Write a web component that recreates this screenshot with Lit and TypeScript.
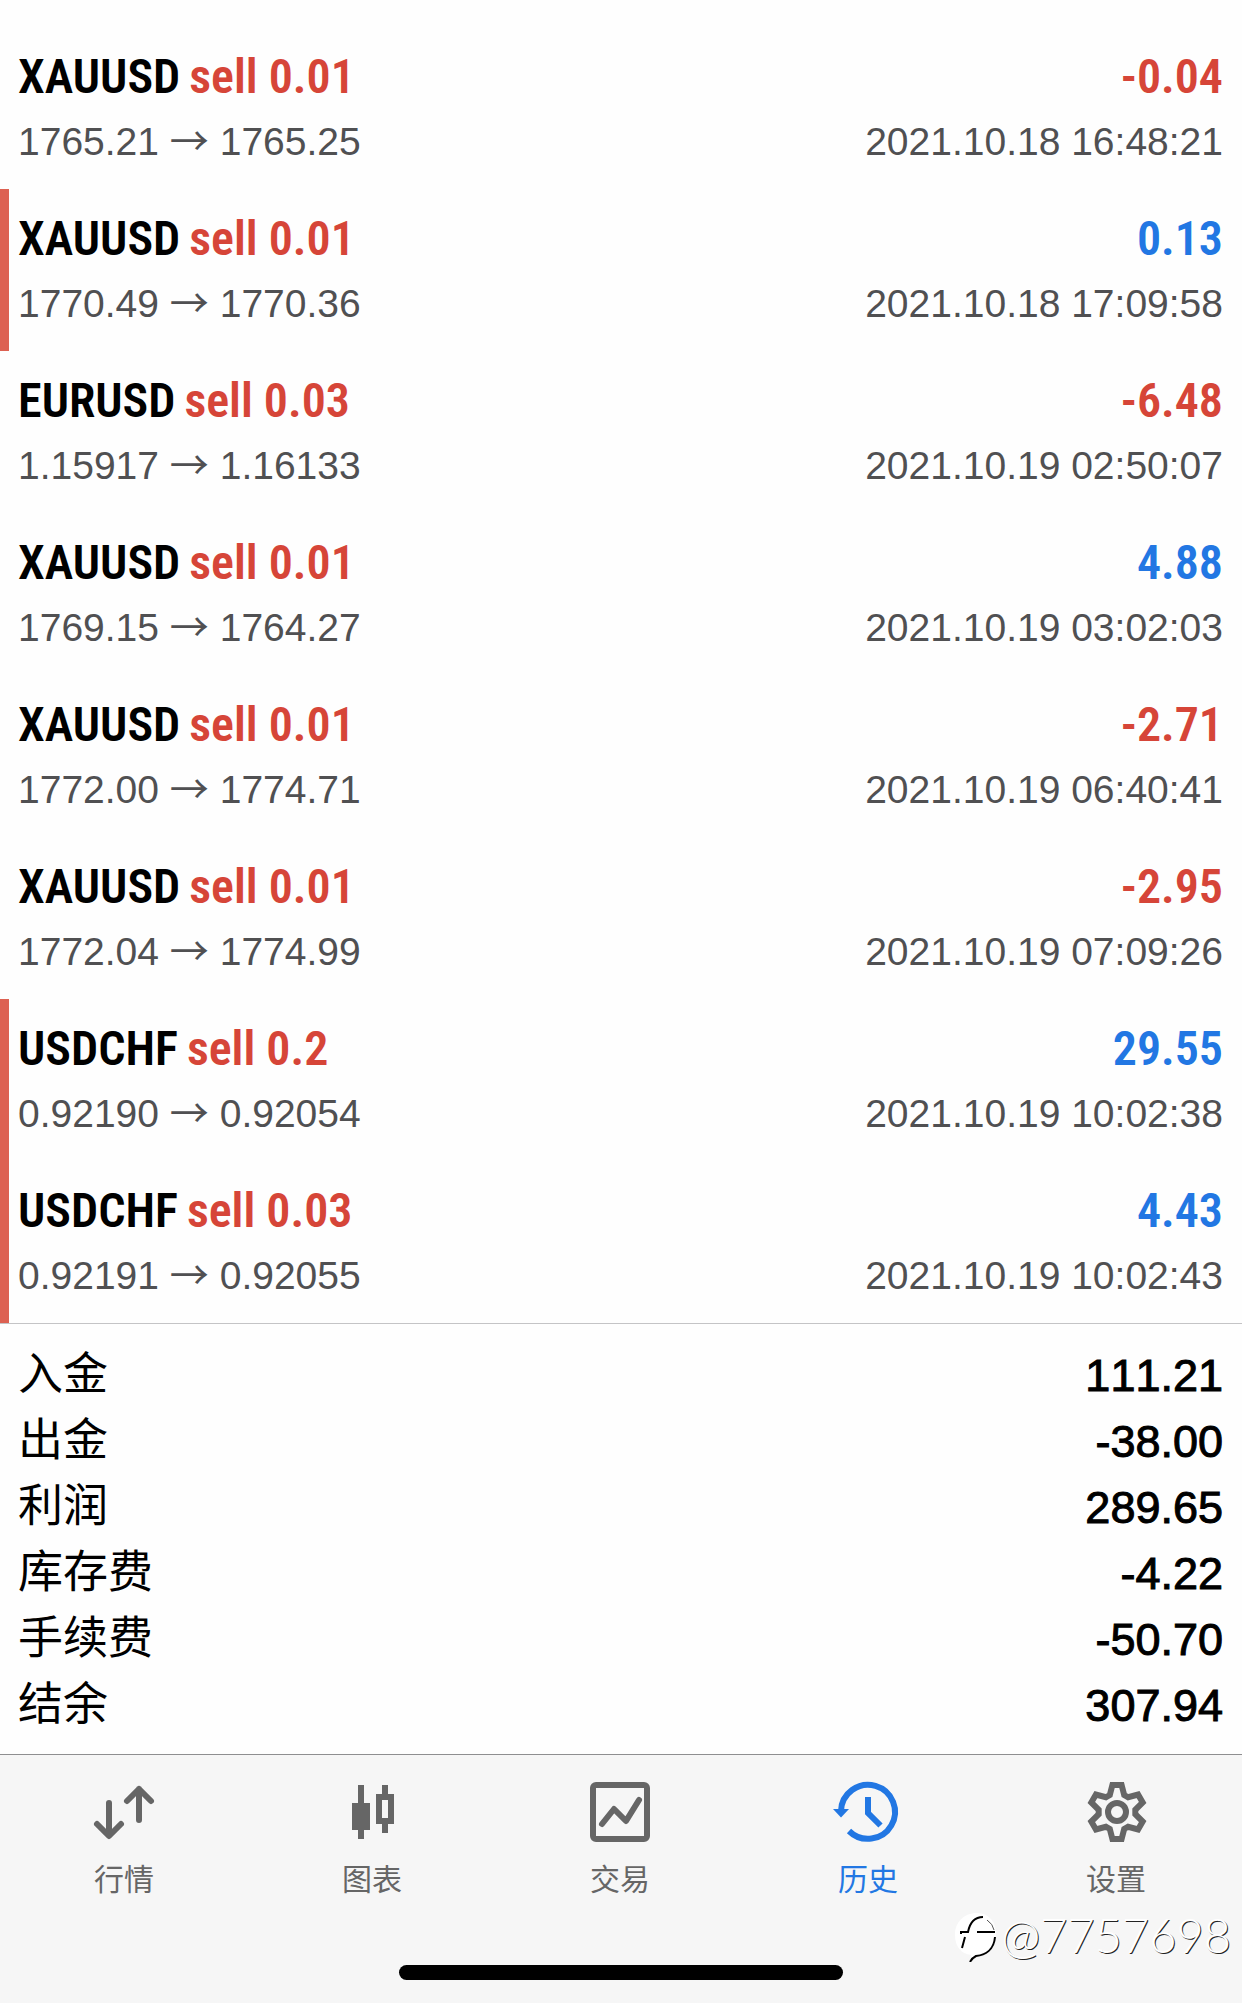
import { LitElement, html, css, svg, nothing } from "lit";
import { customElement, property, state } from "lit/decorators.js";

interface Deal {
  symbol: string;
  side: string;
  volume: string;
  open: string;
  close: string;
  time: string;
  profit: string;
  marked?: boolean;
}

const DEALS: Deal[] = [
  { symbol: "XAUUSD", side: "sell", volume: "0.01", open: "1765.21", close: "1765.25", time: "2021.10.18 16:48:21", profit: "-0.04" },
  { symbol: "XAUUSD", side: "sell", volume: "0.01", open: "1770.49", close: "1770.36", time: "2021.10.18 17:09:58", profit: "0.13", marked: true },
  { symbol: "EURUSD", side: "sell", volume: "0.03", open: "1.15917", close: "1.16133", time: "2021.10.19 02:50:07", profit: "-6.48" },
  { symbol: "XAUUSD", side: "sell", volume: "0.01", open: "1769.15", close: "1764.27", time: "2021.10.19 03:02:03", profit: "4.88" },
  { symbol: "XAUUSD", side: "sell", volume: "0.01", open: "1772.00", close: "1774.71", time: "2021.10.19 06:40:41", profit: "-2.71" },
  { symbol: "XAUUSD", side: "sell", volume: "0.01", open: "1772.04", close: "1774.99", time: "2021.10.19 07:09:26", profit: "-2.95" },
  { symbol: "USDCHF", side: "sell", volume: "0.2", open: "0.92190", close: "0.92054", time: "2021.10.19 10:02:38", profit: "29.55", marked: true },
  { symbol: "USDCHF", side: "sell", volume: "0.03", open: "0.92191", close: "0.92055", time: "2021.10.19 10:02:43", profit: "4.43", marked: true },
];

const TOTALS: [string, string][] = [
  ["入金", "111.21"],
  ["出金", "-38.00"],
  ["利润", "289.65"],
  ["库存费", "-4.22"],
  ["手续费", "-50.70"],
  ["结余", "307.94"],
];

/* One gear tooth, repeated at every 60 degrees around the centre. */
const TOOTH = [[-7.2, -17], [-4.6, -27], [4.6, -27], [7.2, -17]];
const GEAR = [0, 1, 2, 3, 4, 5]
  .flatMap((i) => {
    const c = Math.cos((i * Math.PI) / 3);
    const s = Math.sin((i * Math.PI) / 3);
    return TOOTH.map(([x, y]) => `${(31 + x * c - y * s).toFixed(2)},${(30 + x * s + y * c).toFixed(2)}`);
  })
  .join(" ");

const TABS = [
  {
    id: "quotes",
    label: "行情",
    icon: svg`<g fill="none" stroke="currentColor" stroke-width="6" stroke-linecap="round" stroke-linejoin="round">
      <path d="M15 21V53M3 42L15 54L27 42"/><path d="M45 38V7M33 19L45 7L57 19"/></g>`,
  },
  {
    id: "charts",
    label: "图表",
    icon: svg`<path fill="currentColor" d="M16 3h6v18h6v27h-6v9h-6v-9h-6V21h6z"/>
      <path fill="currentColor" fill-rule="evenodd" d="M40 3h6v9h6v30h-6v9h-6v-9h-6V12h6zM40 18v18h6V18z"/>`,
  },
  {
    id: "trade",
    label: "交易",
    icon: svg`<g fill="none" stroke="currentColor" stroke-width="6">
      <rect x="3" y="3" width="54" height="54" rx="3"/>
      <path stroke-linecap="round" stroke-linejoin="round" d="M12 42L24 27L36 39L49 18"/></g>`,
  },
  {
    id: "history",
    label: "历史",
    icon: svg`<g fill="none" stroke="currentColor" stroke-width="6">
      <path d="M3 29A27 27 0 1 1 11 49"/><path d="M30 15V31L42.500 43.500"/></g>
      <path fill="currentColor" d="M-5 27H11L3 35.500z"/>`,
  },
  {
    id: "settings",
    label: "设置",
    icon: svg`<g fill="none" stroke="currentColor" stroke-width="6">
      <polygon points=${GEAR}/><circle cx="31" cy="30" r="9"/></g>`,
  },
];

@customElement("deal-row")
class DealRow extends LitElement {
  @property({ attribute: false }) deal!: Deal;

  static styles = css`
    :host { display: block; }
    .row {
      display: grid;
      grid-template-columns: 1fr auto;
      grid-template-rows: 63px 67px;
      align-content: start;
      align-items: center;
      min-height: 162px;
      box-sizing: border-box;
      padding: 18px 19px 14px 9px;
      border-left: 9px solid transparent;
    }
    .marked { border-left-color: #dd6152; }
    .head, .profit {
      font: 600 48px/63px "Roboto Condensed", "Liberation Sans Narrow", "Liberation Sans", sans-serif;
      white-space: nowrap;
    }
    .head { display: flex; gap: 9px; }
    .symbol { color: #000; }
    .deal, .loss { color: #d64538; }
    .gain { color: #2277e3; }
    .profit { text-align: right; }
    .prices, .time {
      color: #505052;
      font: 400 39px/51px "Liberation Sans", "Noto Sans CJK SC", sans-serif;
      font-kerning: none;
      white-space: nowrap;
    }
    .arrow { font-family: "Noto Sans CJK SC", sans-serif; line-height: 1; }
  `;

  render() {
    const d = this.deal;
    return html`
      <div class="row ${d.marked ? "marked" : ""}">
        <div class="head"><span class="symbol">${d.symbol}</span> <span class="deal">${d.side} ${d.volume}</span></div>
        <div class="profit ${d.profit.startsWith("-") ? "loss" : "gain"}">${d.profit}</div>
        <div class="prices">${d.open} <span class="arrow">→</span> ${d.close}</div>
        <div class="time">${d.time}</div>
      </div>
    `;
  }
}

@customElement("tab-bar")
class TabBar extends LitElement {
  @state() private active = "history";

  static styles = css`
    :host { display: block; }
    .tabs { display: grid; grid-template-columns: repeat(5, 1fr); padding-right: 2px; }
    .tab {
      display: flex;
      flex-direction: column;
      align-items: center;
      gap: 13px;
      padding: 27px 0 0;
      border: 0;
      background: none;
      color: #666;
      font: 400 30px/44px "Noto Sans CJK SC", sans-serif;
      cursor: pointer;
    }
    .active { color: #2277e3; }
    .icon { display: block; width: 60px; height: 60px; overflow: visible; }
  `;

  render() {
    return html`
      <nav class="tabs">
        ${TABS.map(
          (t) => html`
            <button
              class="tab ${t.id === this.active ? "active" : ""}"
              aria-current=${t.id === this.active ? "page" : nothing}
              @click=${() => (this.active = t.id)}
            >
              <svg class="icon" viewBox="0 0 60 60" aria-hidden="true">${t.icon}</svg>
              <span>${t.label}</span>
            </button>
          `
        )}
      </nav>
    `;
  }
}

@customElement("app-root")
class AppRoot extends LitElement {
  static styles = css`
    :host {
      display: flex;
      flex-direction: column;
      min-height: 100vh;
      background: #fefefe;
      font-family: "Liberation Sans", "Noto Sans CJK SC", sans-serif;
    }
    .deals { padding-top: 27px; }
    .totals {
      margin: 0;
      padding: 17px 19px 17px 18px;
      border-top: 1px solid #c4c4c6;
    }
    .total {
      display: flex;
      justify-content: space-between;
      height: 66px;
      color: #000;
    }
    .name { font: 400 45px/60px "Noto Sans CJK SC", sans-serif; }
    .value {
      margin: 0;
      font: 400 45px/70px "Liberation Sans", sans-serif;
      font-kerning: none;
      -webkit-text-stroke: 1px #000;
    }
    .footer {
      position: relative;
      flex: 1;
      display: flex;
      flex-direction: column;
      justify-content: space-between;
      border-top: 1px solid #8e8e90;
      background: #f6f6f6;
    }
    .home {
      align-self: center;
      width: 444px;
      max-width: 80%;
      height: 15px;
      margin: 0 0 23px;
      border-radius: 8px;
      background: #000;
    }
    .mark {
      position: absolute;
      right: 11px;
      bottom: 41px;
      display: flex;
      align-items: center;
      gap: 4px;
      color: #fff;
      font: 300 47px/48px Lato, sans-serif;
      text-shadow: 1px 1px 0 #222;
    }
    .logo { width: 44px; height: 54px; }
  `;

  render() {
    return html`
      <main class="deals">${DEALS.map((d) => html`<deal-row .deal=${d}></deal-row>`)}</main>
      <dl class="totals">
        ${TOTALS.map(([k, v]) => html`<div class="total"><dt class="name">${k}</dt><dd class="value">${v}</dd></div>`)}
      </dl>
      <footer class="footer">
        <tab-bar></tab-bar>
        <div class="home"></div>
        <div class="mark">
          <svg class="logo" viewBox="0 0 44 54" aria-hidden="true">
            <path fill="#fff" d="M24 5C36 5 43 14 43 26C43 40 34 47 24 48L17 54L18 47C8 46 2 38 2 27C2 14 11 5 24 5z"/>
            <path fill="none" stroke="#000" stroke-width="2" d="M8 26V24H15Q18 9 30 9M24 24H42M12 29L9 40M42 29C41 42 32 47 23 48Q19 50 17 54"/>
            <path fill="none" stroke="#555" d="M34 12Q40 16 41 22"/>
          </svg>
          <span>@7757698</span>
        </div>
      </footer>
    `;
  }
}
